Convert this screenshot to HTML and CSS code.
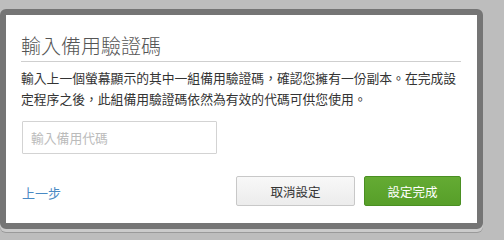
FILE: index.html
```html
<!DOCTYPE html>
<html lang="zh-Hant">
<head>
<meta charset="utf-8">
<title>輸入備用驗證碼</title>
<link rel="stylesheet" href="styles.css">
</head>
<body>
<div class="backdrop">
  <div class="dialog">
    <h1 class="title">輸入備用驗證碼</h1>
    <p class="desc">輸入上一個螢幕顯示的其中一組備用驗證碼，確認您擁有一份副本。在完成設定程序之後，此組備用驗證碼依然為有效的代碼可供您使用。</p>
    <input class="code" type="text" placeholder="輸入備用代碼">
    <div class="footer">
      <a class="back" href="#">上一步</a>
      <div class="actions">
        <button class="btn btn-cancel" type="button">取消設定</button>
        <button class="btn btn-done" type="button">設定完成</button>
      </div>
    </div>
  </div>
</div>
</body>
</html>
```
FILE: styles.css
```css
html, body {
  margin: 0;
  padding: 0;
}
body {
  background: #bdbdbd;
  font-family: "Noto Sans CJK TC", "Liberation Sans", sans-serif;
  width: 504px;
  height: 239px;
  overflow: hidden;
}
.backdrop {
  padding: 9px 21px 0 0;
}
.dialog {
  background: #fff;
  border: 6px solid #757575;
  border-radius: 6px;
  padding: 0 16px 17px 15px;
  box-shadow: 0 3px 0 #cbcbcb, 0 4px 0 #9a9a9a;
}
.title {
  margin: 0;
  padding: 19px 0 3px;
  font-size: 20px;
  line-height: 24px;
  font-weight: 300;
  color: #555;
  border-bottom: 1px solid #cfcfcf;
}
.desc {
  margin: 5px 0 0;
  width: 436px;
  font-size: 12.8px;
  line-height: 21px;
  color: #333;
}
.code {
  display: block;
  box-sizing: border-box;
  margin: 12px 0 0 1px;
  width: 195px;
  height: 33px;
  padding: 0 8px;
  border: 1px solid #d3d3d3;
  border-radius: 1px;
  font-family: inherit;
  font-size: 12.8px;
  color: #333;
  outline: none;
}
.code::placeholder {
  color: #bbb;
}
.footer {
  margin-top: 22px;
  display: flex;
  align-items: center;
  justify-content: space-between;
}
.back {
  margin-left: 1px;
  margin-top: 3px;
  font-size: 13px;
  color: #4a8ac4;
  text-decoration: none;
}
.actions {
  display: flex;
  gap: 9px;
}
.btn {
  box-sizing: border-box;
  height: 30px;
  border-radius: 2px;
  font-family: inherit;
  font-size: 12.5px;
  padding: 0;
  cursor: pointer;
}
.btn-cancel {
  width: 119px;
  background: linear-gradient(#f8f8f8, #ececec);
  border: 1px solid #c8c8c8;
  color: #333;
}
.btn-done {
  width: 97px;
  background: linear-gradient(#64ab33, #579f29);
  border: 1px solid #4a8f22;
  color: #fff;
}
```
